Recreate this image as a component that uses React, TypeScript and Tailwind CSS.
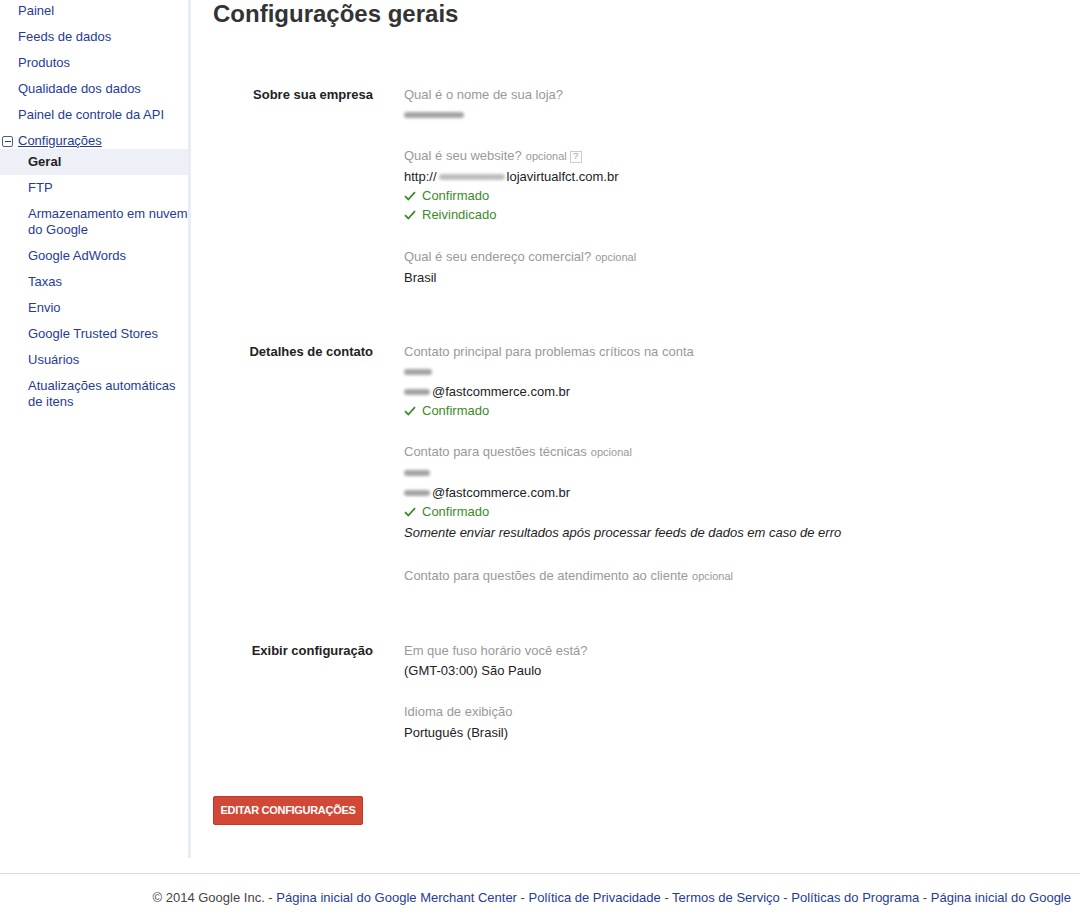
import React from 'react';

const linkColor = 'text-[#263c94]';

const Blur = ({ w, className = '' }: { w: string; className?: string }) => (
  <span className={`inline-block h-[6px] rounded-full bg-[#a3a3a3] blur-[1.5px] ${w} ${className}`} />
);

const Check = ({ text }: { text: string }) => (
  <div className="flex h-[18px] items-center text-[#3b8a28]">
    <svg width="12" height="10" viewBox="0 0 12 10" className="mr-[6px]">
      <path d="M1 5.2 L4.3 8.5 L11 1.2" fill="none" stroke="#3b8a28" strokeWidth="1.8" />
    </svg>
    {text}
  </div>
);

const Opcional = () => <span className="ml-1 text-[11px] text-[#999]">opcional</span>;

const Label = ({ children }: { children: React.ReactNode }) => (
  <div className="leading-[21px] text-[#999]">{children}</div>
);

const Line = ({ children }: { children: React.ReactNode }) => (
  <div className="flex h-5 items-center">{children}</div>
);

const Section = ({
  title,
  className = '',
  children,
}: {
  title: string;
  className?: string;
  children: React.ReactNode;
}) => (
  <div className={`grid grid-cols-[160px_1fr] gap-x-[31px] ${className}`}>
    <div className="text-right font-bold leading-[21px] text-[#222]">{title}</div>
    <div>{children}</div>
  </div>
);

const sideTop = ['Painel', 'Feeds de dados', 'Produtos', 'Qualidade dos dados', 'Painel de controle da API'];
const sideSub: React.ReactNode[] = [
  'FTP',
  <>
    Armazenamento em nuvem
    <br />
    do Google
  </>,
  'Google AdWords',
  'Taxas',
  'Envio',
  'Google Trusted Stores',
  'Usuários',
  <>
    Atualizações automáticas
    <br />
    de itens
  </>,
];

const footerLinks = [
  'Página inicial do Google Merchant Center',
  'Política de Privacidade',
  'Termos de Serviço',
  'Políticas do Programa',
  'Página inicial do Google',
];

export default function App() {
  return (
    <div className="min-h-screen bg-white font-['Liberation_Sans',Arial,sans-serif] text-[13px] text-[#222]">
      <div className="flex">
        {/* sidebar */}
        <aside className="w-[191px] shrink-0 border-r-[3px] border-[#e8ecf5]">
          <nav className="-mt-[2px] leading-4">
            {sideTop.map((s) => (
              <div key={s} className={`py-[5px] pl-[18px] ${linkColor}`}>
                {s}
              </div>
            ))}
            <div className="flex items-center pl-[2px] pt-[5px]">
              <span className="mr-[5px] flex h-[11px] w-[11px] items-center justify-center rounded-[2px] border border-[#4f5f8a]">
                <span className="h-px w-[6px] bg-[#2f3d6b]" />
              </span>
              <span className={`underline ${linkColor}`}>Configurações</span>
            </div>
            <div className="bg-[#eef0f8] py-[5px] pl-[28px] font-bold text-[#222]">Geral</div>
            {sideSub.map((s, i) => (
              <div key={i} className={`whitespace-nowrap py-[5px] pl-[28px] ${linkColor}`}>
                {s}
              </div>
            ))}
          </nav>
        </aside>

        {/* main */}
        <main className="flex-1 pb-[33px] pl-[22px]">
          <h1 className="text-[24px] font-bold leading-7 text-[#333]">Configurações gerais</h1>

          <Section title="Sobre sua empresa" className="mt-[56px]">
            <Label>Qual é o nome de sua loja?</Label>
            <Line>
              <Blur w="w-[60px]" />
            </Line>

            <div className="mt-5">
              <Label>
                Qual é seu website?
                <Opcional />
                <span className="ml-[3px] inline-flex h-[12px] w-[12px] items-center justify-center border border-[#ccc] align-middle text-[9px] leading-none text-[#999]">
                  ?
                </span>
              </Label>
              <Line>
                http://
                <Blur w="w-[66px]" className="mx-[2px] bg-[#bdbdbd]" />
                lojavirtualfct.com.br
              </Line>
              <Check text="Confirmado" />
              <div className="mt-px">
                <Check text="Reivindicado" />
              </div>
            </div>

            <div className="mt-[22px]">
              <Label>
                Qual é seu endereço comercial?
                <Opcional />
              </Label>
              <Line>Brasil</Line>
            </div>
          </Section>

          <Section title="Detalhes de contato" className="mt-[53px]">
            <Label>Contato principal para problemas críticos na conta</Label>
            <Line>
              <Blur w="w-[28px]" />
            </Line>
            <Line>
              <Blur w="w-[26px]" className="mr-[2px]" />
              @fastcommerce.com.br
            </Line>
            <Check text="Confirmado" />

            <div className="mt-[21px]">
              <Label>
                Contato para questões técnicas
                <Opcional />
              </Label>
              <Line>
                <Blur w="w-[26px]" />
              </Line>
              <Line>
                <Blur w="w-[26px]" className="mr-[2px]" />
                @fastcommerce.com.br
              </Line>
              <Check text="Confirmado" />
              <div className="mt-[2px] italic leading-5">
                Somente enviar resultados após processar feeds de dados em caso de erro
              </div>
            </div>

            <div className="mt-[22px]">
              <Label>
                Contato para questões de atendimento ao cliente
                <Opcional />
              </Label>
            </div>
          </Section>

          <Section title="Exibir configuração" className="mt-[53px]">
            <Label>Em que fuso horário você está?</Label>
            <Line>(GMT-03:00) São Paulo</Line>

            <div className="mt-5">
              <Label>Idioma de exibição</Label>
              <div className="mt-px">
                <Line>Português (Brasil)</Line>
              </div>
            </div>
          </Section>

          <button className="mt-[53px] h-[29px] w-[150px] rounded-[2px] border border-[#c53727] bg-[#d14836] text-[11px] font-bold tracking-[-0.3px] text-white">
            EDITAR CONFIGURAÇÕES
          </button>
        </main>
      </div>

      <footer className="mt-[15px] border-t border-[#dcdcdc] pb-[7px] pr-[9px] pt-[14px] text-right leading-5 text-[#444]">
        © 2014 Google Inc.
        {footerLinks.map((l) => (
          <span key={l}>
            {' - '}
            <span className={linkColor}>{l}</span>
          </span>
        ))}
      </footer>
    </div>
  );
}
